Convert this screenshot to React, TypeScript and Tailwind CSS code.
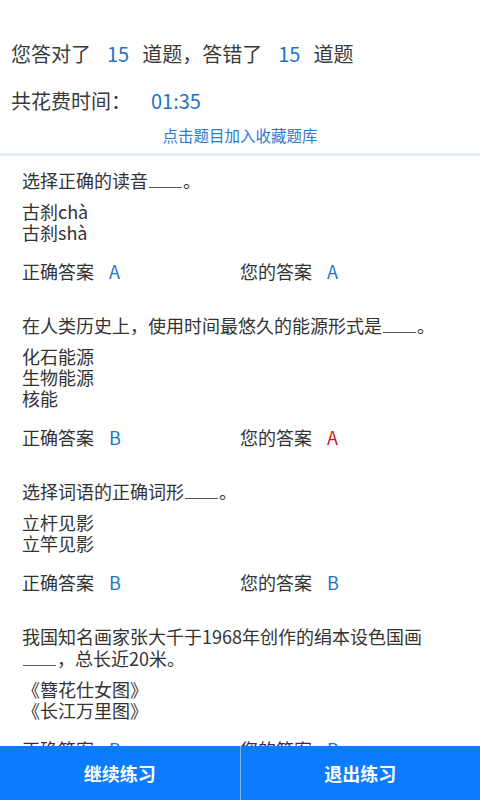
import React from 'react';

const FONT = { fontFamily: '"Noto Sans CJK SC", "Noto Sans", sans-serif' };

type Question = {
  title: React.ReactNode;
  options: string[];
  correct: string;
  mine: string;
};

const Blank = () => (
  <span className="inline-block w-[33px] h-[16px] border-b border-[#555] align-baseline mx-[1px]" />
);

const questions: Question[] = [
  {
    title: (
      <>
        选择正确的读音<Blank />。
      </>
    ),
    options: ['古刹chà', '古刹shà'],
    correct: 'A',
    mine: 'A',
  },
  {
    title: (
      <>
        在人类历史上，使用时间最悠久的能源形式是<Blank />。
      </>
    ),
    options: ['化石能源', '生物能源', '核能'],
    correct: 'B',
    mine: 'A',
  },
  {
    title: (
      <>
        选择词语的正确词形<Blank />。
      </>
    ),
    options: ['立杆见影', '立竿见影'],
    correct: 'B',
    mine: 'B',
  },
  {
    title: (
      <>
        我国知名画家张大千于1968年创作的绢本设色国画
        <span className="whitespace-nowrap">
          <Blank />，
        </span>
        总长近20米。
      </>
    ),
    options: ['《簪花仕女图》', '《长江万里图》'],
    correct: 'B',
    mine: 'B',
  },
];

export default function App() {
  return (
    <div className="min-h-[800px] bg-white text-[#333]" style={FONT}>
      {/* Summary */}
      <div className="pt-[40px] pl-[11px] text-[20px] leading-[28px] text-[#3a3a3a]">
        <p>
          您答对了<span className="text-[#1f74c8] ml-[16px] mr-[13px]">15</span>道题，答错了
          <span className="text-[#1f74c8] ml-[16px] mr-[13px]">15</span>道题
        </p>
        <p className="mt-[19px]">
          共花费时间：<span className="text-[#1f74c8] ml-[20px]">01:35</span>
        </p>
      </div>
      <p className="mt-[10px] text-center text-[15.5px] leading-[20px] text-[#2a7bd0]">点击题目加入收藏题库</p>
      <div className="mt-[8px] h-[3px] bg-[#e4eef9]" />

      {/* Questions */}
      <div className="px-[22px] pt-[13px] pb-[70px]">
        {questions.map((q, i) => (
          <div key={i} className={i > 0 ? 'mt-[32px]' : ''}>
            <p className="text-[18px] leading-[22px]">{q.title}</p>
            <div className="mt-[10px] text-[18px] leading-[21px]">
              {q.options.map((o) => (
                <p key={o}>{o}</p>
              ))}
            </div>
            <div className="mt-[17px] grid grid-cols-2 text-[18px] leading-[22px]">
              <p>
                正确答案<span className="ml-[15px] text-[#1f74c8]">{q.correct}</span>
              </p>
              <p>
                您的答案
                <span className={`ml-[15px] ${q.mine === q.correct ? 'text-[#1f74c8]' : 'text-[#d0121b]'}`}>
                  {q.mine}
                </span>
              </p>
            </div>
          </div>
        ))}
      </div>

      {/* Bottom actions */}
      <div className="fixed bottom-0 left-0 right-0 h-[54px] flex bg-[#0b7bff] text-white text-[18px] font-bold">
        <button className="flex-1 flex items-center justify-center border-r border-[#7ab6ff]">继续练习</button>
        <button className="flex-1 flex items-center justify-center">退出练习</button>
      </div>
    </div>
  );
}
